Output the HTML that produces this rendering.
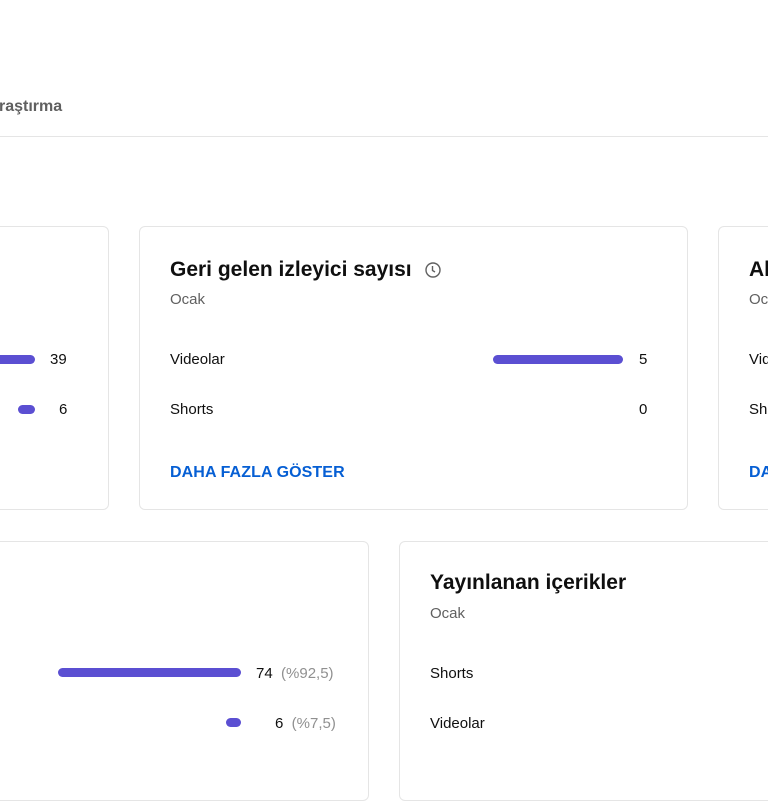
<!DOCTYPE html>
<html><head><meta charset="utf-8"><style>
*{margin:0;padding:0;box-sizing:border-box}
body{width:768px;height:768px;overflow:hidden;background:#fff;font-family:"Liberation Sans",Arial,sans-serif;position:relative;color:#0f0f0f}
.a{position:absolute;white-space:nowrap}
.card{position:absolute;border:1px solid #e5e5e5;border-radius:6px;background:#fff}
.t{font-size:21px;font-weight:bold;color:#0f0f0f;letter-spacing:0}
.s{font-size:15px;color:#606060}
.l{font-size:15px;color:#0f0f0f}
.bar{position:absolute;height:9px;border-radius:5px;background:#5b4fd2}
.m{font-size:16px;font-weight:bold;color:#065fd4;letter-spacing:0.1px}
.g{color:#909090}
</style></head><body>
<div class="a" style="left:-1px;top:98px;font-size:16px;font-weight:bold;color:#606060">raştırma</div>
<div class="a" style="left:0;top:136px;width:768px;height:1px;background:#e5e5e5"></div>

<div class="card" style="left:-20px;top:226px;width:129px;height:284px"></div>
<div class="bar" style="left:-10px;top:355px;width:45px"></div>
<div class="a l" style="left:50px;top:351px">39</div>
<div class="bar" style="left:18px;top:405px;width:17px"></div>
<div class="a l" style="left:59px;top:401px">6</div>

<div class="card" style="left:139px;top:226px;width:549px;height:284px"></div>
<div class="a t" style="left:170px;top:258px">Geri gelen izleyici sayısı</div>
<svg class="a" style="left:424px;top:261px" width="18" height="18" viewBox="0 0 18 18"><circle cx="9" cy="9" r="7" fill="none" stroke="#606060" stroke-width="1.4"/><path d="M8.5 5v4.5l2.5 1.5" fill="none" stroke="#606060" stroke-width="1.4"/></svg>
<div class="a s" style="left:170px;top:291px">Ocak</div>
<div class="a l" style="left:170px;top:351px">Videolar</div>
<div class="bar" style="left:493px;top:355px;width:130px"></div>
<div class="a l" style="left:639px;top:351px">5</div>
<div class="a l" style="left:170px;top:401px">Shorts</div>
<div class="a l" style="left:639px;top:401px">0</div>
<div class="a m" style="left:170px;top:464px">DAHA FAZLA GÖSTER</div>

<div class="card" style="left:718px;top:226px;width:100px;height:284px"></div>
<div class="a t" style="left:749px;top:258px">Al</div>
<div class="a s" style="left:749px;top:291px">Oc</div>
<div class="a l" style="left:749px;top:351px">Vid</div>
<div class="a l" style="left:749px;top:401px">Sh</div>
<div class="a m" style="left:749px;top:464px">DA</div>

<div class="card" style="left:-20px;top:541px;width:389px;height:260px"></div>
<div class="bar" style="left:58px;top:668px;width:183px"></div>
<div class="a l" style="left:256px;top:665px">74 <span class="g">&nbsp;(%92,5)</span></div>
<div class="bar" style="left:226px;top:718px;width:15px"></div>
<div class="a l" style="left:275px;top:715px">6 <span class="g">&nbsp;(%7,5)</span></div>

<div class="card" style="left:399px;top:541px;width:400px;height:260px"></div>
<div class="a t" style="left:430px;top:571px">Yayınlanan içerikler</div>
<div class="a s" style="left:430px;top:605px">Ocak</div>
<div class="a l" style="left:430px;top:665px">Shorts</div>
<div class="a l" style="left:430px;top:715px">Videolar</div>
</body></html>
